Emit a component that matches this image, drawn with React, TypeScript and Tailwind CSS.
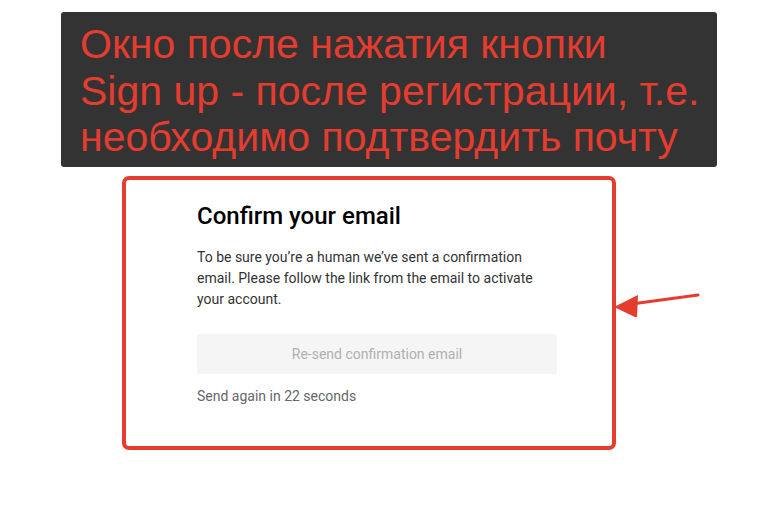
import React from 'react';

const Arrow: React.FC = () => (
  <svg width="90" height="30" viewBox="0 0 90 30">
    <line x1="86" y1="8" x2="12" y2="18" stroke="#e53c30" strokeWidth="3" strokeLinecap="round" />
    <polygon points="2,20 26,8 25,31" fill="#e53c30" />
  </svg>
);

const App: React.FC = () => {
  return (
    <div className="flex h-[521px] w-[763px] flex-col overflow-hidden bg-white pt-[12px]">
      <div className="ml-[61px] h-[155px] w-[656px] rounded-[3px] bg-[#333333] px-[19px] pt-[9px]">
        <p className="whitespace-nowrap font-['Liberation_Sans',Arial,sans-serif] text-[41px] leading-[46.5px] text-[#e53c30]">
          Окно после нажатия кнопки
          <br />
          Sign up - после регистрации, т.е.
          <br />
          необходимо подтвердить почту
        </p>
      </div>

      <div className="relative ml-[122px] mt-[9px] h-[274px] w-[494px] rounded-[7px] border-[4px] border-[#e53c30] bg-white">
        <div className="ml-[71px] w-[360px] pt-[21px] font-['Roboto',sans-serif]">
          <h1 className="text-[24px] font-medium leading-[30px] text-black">Confirm your email</h1>
          <p className="mt-[16px] text-[14px] leading-[21px] text-[#333333]">
            To be sure you’re a human we’ve sent a confirmation email. Please follow the link from the email to
            activate your account.
          </p>
          <button
            type="button"
            className="mt-[24px] flex h-[40px] w-[360px] items-center justify-center rounded-[3px] bg-[#f5f5f5] text-[14px] text-[#b0b0b0]"
          >
            Re-send confirmation email
          </button>
          <p className="mt-[12px] text-[14px] leading-[20px] text-[#666666]">Send again in 22 seconds</p>
        </div>

        <div className="absolute left-[486px] top-[107px]">
          <Arrow />
        </div>
      </div>
    </div>
  );
};

export default App;
